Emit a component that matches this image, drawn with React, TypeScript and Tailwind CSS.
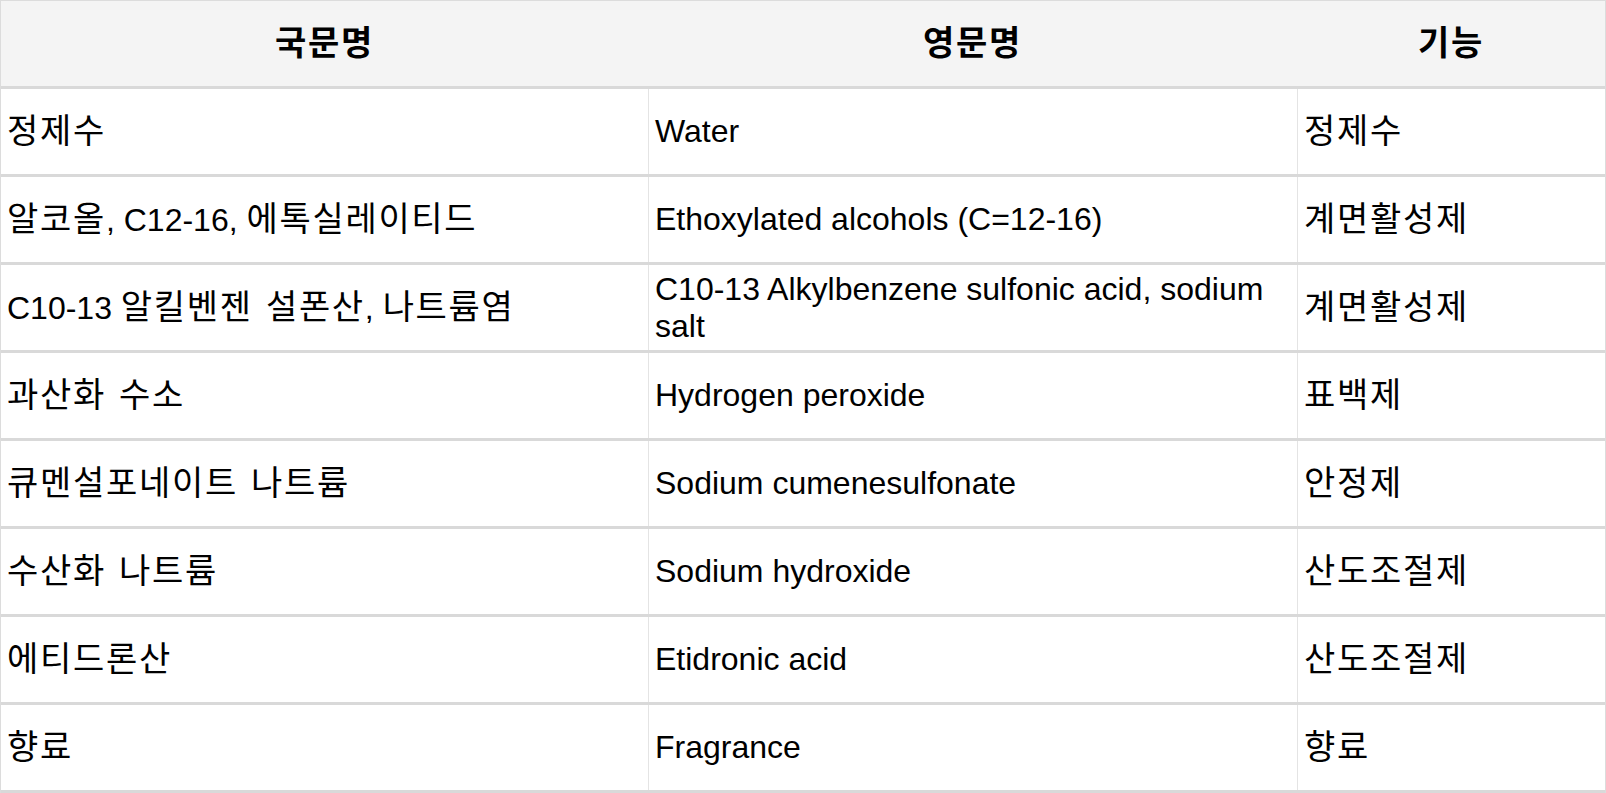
const rows: [string, string, string][] = [
  ['정제수', 'Water', '정제수'],
  ['알코올, C12-16, 에톡실레이티드', 'Ethoxylated alcohols (C=12-16)', '계면활성제'],
  ['C10-13 알킬벤젠 설폰산, 나트륨염', 'C10-13 Alkylbenzene sulfonic acid, sodium salt', '계면활성제'],
  ['과산화 수소', 'Hydrogen peroxide', '표백제'],
  ['큐멘설포네이트 나트륨', 'Sodium cumenesulfonate', '안정제'],
  ['수산화 나트륨', 'Sodium hydroxide', '산도조절제'],
  ['에티드론산', 'Etidronic acid', '산도조절제'],
  ['향료', 'Fragrance', '향료'],
]

// hangul runs are set a bit larger so they sit as wide as the reference font
function Ko({ text }: { text: string }) {
  const parts = text.split(/([가-힣]+(?: [가-힣]+)*)/)
  return (
    <span>
      {parts.map((p, i) =>
        /[가-힣]/.test(p) ? (
          <span key={i} className="text-[34px] tracking-[1.7px] [word-spacing:2px]">
            {p}
          </span>
        ) : (
          <span key={i}>{p}</span>
        )
      )}
    </span>
  )
}

export default function App() {
  return (
    <div
      className="w-[1606px] bg-white text-black text-[32px] leading-normal"
      style={{ fontFamily: '"Liberation Sans", Arial, "Noto Sans CJK KR", sans-serif' }}
    >
      <div className="border-x border-t border-[#dcdcdc]">
        <div className="grid grid-cols-[647px_649px_308px] h-[88px] bg-[#f4f4f4] border-b-[3px] border-[#d9d9d9] font-bold">
          <div className="flex items-center justify-center"><Ko text="국문명" /></div>
          <div className="flex items-center justify-center"><Ko text="영문명" /></div>
          <div className="flex items-center justify-center"><Ko text="기능" /></div>
        </div>
        {rows.map(([ko, en, fn], i) => (
          <div
            key={i}
            className="grid grid-cols-[647px_649px_308px] h-[88px] border-b-[3px] border-[#d9d9d9]"
          >
            <div className="flex items-center px-[6px]"><Ko text={ko} /></div>
            <div className="flex items-center px-[6px] border-l border-[#e4e4e4] leading-[37px]">{en}</div>
            <div className="flex items-center px-[6px] border-l border-[#e4e4e4]"><Ko text={fn} /></div>
          </div>
        ))}
      </div>
    </div>
  )
}
